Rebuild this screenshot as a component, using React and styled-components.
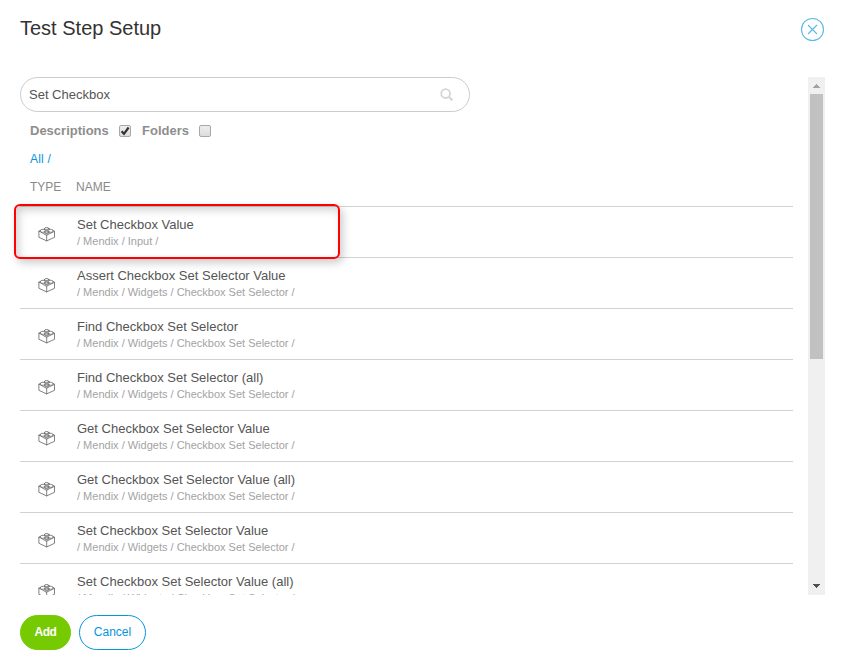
import React from "react";
import styled, { createGlobalStyle } from "styled-components";

const GlobalStyle = createGlobalStyle`
  * { box-sizing: border-box; }
  body {
    margin: 0;
    background: #fff;
    font-family: "Liberation Sans", Arial, sans-serif;
    font-size: 13px;
    color: #555;
    overflow: hidden;
  }
`;

const Dialog = styled.main`
  display: flex;
  flex-direction: column;
  height: 670px;
  padding: 0 20px;
`;

const Header = styled.header`
  display: flex;
  justify-content: space-between;
  height: 77px;
  padding-top: 16px;
`;

const Title = styled.h1`
  margin: 0;
  font-size: 20px;
  font-weight: 400;
  line-height: 24px;
  color: #333;
`;

const CloseButton = styled.button`
  display: block;
  width: 25px;
  height: 25px;
  margin-top: 1px;
  padding: 0;
  border: 0;
  background: none;
  svg { display: block; }
`;

const Body = styled.section`
  display: flex;
  justify-content: space-between;
  height: 518px;
`;

const Content = styled.div`
  width: 773px;
  height: 518px;
  overflow: hidden;
`;

const SearchField = styled.label`
  display: flex;
  align-items: center;
  justify-content: space-between;
  width: 450px;
  height: 35px;
  padding: 0 15px 0 8px;
  border: 1px solid #ccc;
  border-radius: 18px;
`;

const SearchInput = styled.input`
  flex: 1;
  padding: 0;
  border: 0;
  outline: 0;
  font: inherit;
  color: #555;
`;

const Filters = styled.div`
  display: flex;
  align-items: center;
  height: 20px;
  margin-top: 9px;
  padding-left: 10px;
`;

const FilterLabel = styled.span`
  width: ${(p) => p.$width}px;
  font-weight: 700;
  line-height: 20px;
  color: #8e8e8e;
`;

const CheckBox = styled.span`
  width: 12px;
  height: 12px;
  margin: 0 11px 0 0;
  border: 1px solid #a8a8a8;
  border-radius: 2px;
  background: linear-gradient(#eee, #dcdcdc);
  svg { display: block; overflow: visible; }
`;

const Breadcrumb = styled.nav`
  height: 20px;
  margin-top: 8px;
  padding-left: 10px;
  font-size: 12px;
  letter-spacing: 0.2px;
  line-height: 20px;
  color: #0595db;
`;

const ColumnHeads = styled.div`
  display: grid;
  grid-template-columns: 46px 1fr;
  height: 37px;
  padding: 8px 0 0 10px;
  font-size: 12px;
  line-height: 20px;
  color: #8a8a8a;
`;

const Row = styled.article`
  display: grid;
  grid-template-columns: 57px 1fr;
  height: 51px;
  border-top: 1px solid #d2d2d2;
`;

const TypeCell = styled.div`
  padding: 20px 0 0 18px;
  svg { display: block; }
`;

const StepName = styled.div`
  padding-top: 9px;
  line-height: 18px;
  color: #555;
`;

const StepPath = styled.div`
  font-size: 11px;
  line-height: 15px;
  color: #a3a3a3;
`;

const Highlight = styled.div`
  position: absolute;
  z-index: 2;
  left: 14px;
  top: 204px;
  width: 326px;
  height: 55px;
  border: 2px solid #f00;
  border-radius: 6px;
  box-shadow: 3px 4px 8px rgba(0, 0, 0, 0.2), inset 3px 4px 8px rgba(0, 0, 0, 0.18);
`;

const ScrollTrack = styled.div`
  display: flex;
  flex-direction: column;
  width: 17px;
  height: 518px;
  background: #f0f0f0;
`;

const ScrollArrow = styled.div`
  height: 17px;
  color: ${(p) => p.$color};
  svg { display: block; }
`;

const ScrollThumb = styled.div`
  width: 13px;
  height: 265px;
  margin: 0 2px auto;
  background: #c1c1c1;
`;

const Footer = styled.footer`
  display: flex;
  gap: 8px;
  margin-top: 20px;
`;

const ActionButton = styled.button`
  width: ${(p) => (p.$primary ? 51 : 67)}px;
  height: 35px;
  padding: 0 0 2px;
  border: 1px solid ${(p) => (p.$primary ? "#76ca02" : "#0595db")};
  border-radius: 18px;
  background: ${(p) => (p.$primary ? "#76ca02" : "#fff")};
  color: ${(p) => (p.$primary ? "#fff" : "#0595db")};
  font: ${(p) => (p.$primary ? 700 : 400)} 12px "Liberation Sans", Arial, sans-serif;
  letter-spacing: ${(p) => (p.$primary ? "-0.4px" : "0")};
`;

const BrickIcon = () => (
  <svg width="18" height="15" viewBox="0 0 18 15" fill="none" stroke="#6c6c6c" strokeWidth="0.85" strokeLinejoin="round" strokeLinecap="round">
    <path d="M.9 4.3v6l7.8 3.6 7.8-3.6v-6L8.7 8.1z" />
    <path d="M8.7 8.1v5.8" />
    <path d="M.9 4.3l1.6-.9M16.5 4.3l-1.6-.9" />
    <ellipse cx="8.7" cy="1.5" rx="2.2" ry="1" />
    <path d="M6.5 1.5v1.3c0 .6 1 1 2.2 1s2.2-.4 2.2-1V1.5" />
    <path d="M6.5 2.5c-2-.6-4 0-4 .9v.9c0 .6.9 1 2.1 1s2.1-.4 2.1-1M10.9 2.5c2-.6 4 0 4 .9v.9c0 .6-.9 1-2.1 1s-2.1-.4-2.1-1" />
    <ellipse cx="8.7" cy="5" rx="2.1" ry="1" />
    <path d="M6.6 5v.8c0 .6.9 1 2.1 1s2.1-.4 2.1-1V5" />
  </svg>
);

const SearchIcon = () => (
  <svg width="14" height="14" viewBox="0 0 14 14" fill="none" stroke="#d6d6d6">
    <circle cx="5.6" cy="5.6" r="4.4" strokeWidth="1.8" />
    <path d="M9 9l3.4 3.4" strokeWidth="2.2" />
  </svg>
);

const SELECTOR_PATH = "/ Mendix / Widgets / Checkbox Set Selector /";

const steps = [
  ["Set Checkbox Value", "/ Mendix / Input /"],
  ["Assert Checkbox Set Selector Value", SELECTOR_PATH],
  ["Find Checkbox Set Selector", SELECTOR_PATH],
  ["Find Checkbox Set Selector (all)", SELECTOR_PATH],
  ["Get Checkbox Set Selector Value", SELECTOR_PATH],
  ["Get Checkbox Set Selector Value (all)", SELECTOR_PATH],
  ["Set Checkbox Set Selector Value", SELECTOR_PATH],
  ["Set Checkbox Set Selector Value (all)", SELECTOR_PATH],
];

export default function App() {
  return (
    <>
      <GlobalStyle />
      <Dialog>
        <Header>
          <Title>Test Step Setup</Title>
          <CloseButton aria-label="Close">
            <svg width="25" height="25" viewBox="0 0 25 25" fill="none" stroke="#5bb9e6">
              <circle cx="12.5" cy="12.5" r="11" strokeWidth="1.1" />
              <path d="M8 8l9 9M17 8l-9 9" strokeWidth="1.1" />
            </svg>
          </CloseButton>
        </Header>
        <Body>
          <Content>
            <SearchField>
              <SearchInput defaultValue="Set Checkbox" />
              <SearchIcon />
            </SearchField>
            <Filters>
              <FilterLabel $width={89}>Descriptions</FilterLabel>
              <CheckBox role="checkbox" aria-checked="true">
                <svg width="10" height="10" viewBox="0 0 10 10" fill="none" stroke="#333" strokeWidth="2.2">
                  <path d="M1.6 5.2l2.4 2.6L8.6 1.5" />
                </svg>
              </CheckBox>
              <FilterLabel $width={57}>Folders</FilterLabel>
              <CheckBox role="checkbox" aria-checked="false" />
            </Filters>
            <Breadcrumb>All /</Breadcrumb>
            <ColumnHeads>
              <span>TYPE</span>
              <span>NAME</span>
            </ColumnHeads>
            {steps.map(([name, path]) => (
              <Row key={name}>
                <TypeCell>
                  <BrickIcon />
                </TypeCell>
                <div>
                  <StepName>{name}</StepName>
                  <StepPath>{path}</StepPath>
                </div>
              </Row>
            ))}
          </Content>
          <ScrollTrack>
            <ScrollArrow $color="#a3a3a3">
              <svg width="17" height="17" fill="currentColor" shapeRendering="crispEdges">
                <path d="M8 7h1v1h1v1h1v1h1v1H5v-1h1V9h1V8h1z" />
              </svg>
            </ScrollArrow>
            <ScrollThumb />
            <ScrollArrow $color="#505050">
              <svg width="17" height="17" fill="currentColor" shapeRendering="crispEdges">
                <path d="M5 6h7v1h-1v1h-1v1H9v1H8V9H7V8H6V7H5z" />
              </svg>
            </ScrollArrow>
          </ScrollTrack>
        </Body>
        <Footer>
          <ActionButton $primary>Add</ActionButton>
          <ActionButton>Cancel</ActionButton>
        </Footer>
        <Highlight />
      </Dialog>
    </>
  );
}
